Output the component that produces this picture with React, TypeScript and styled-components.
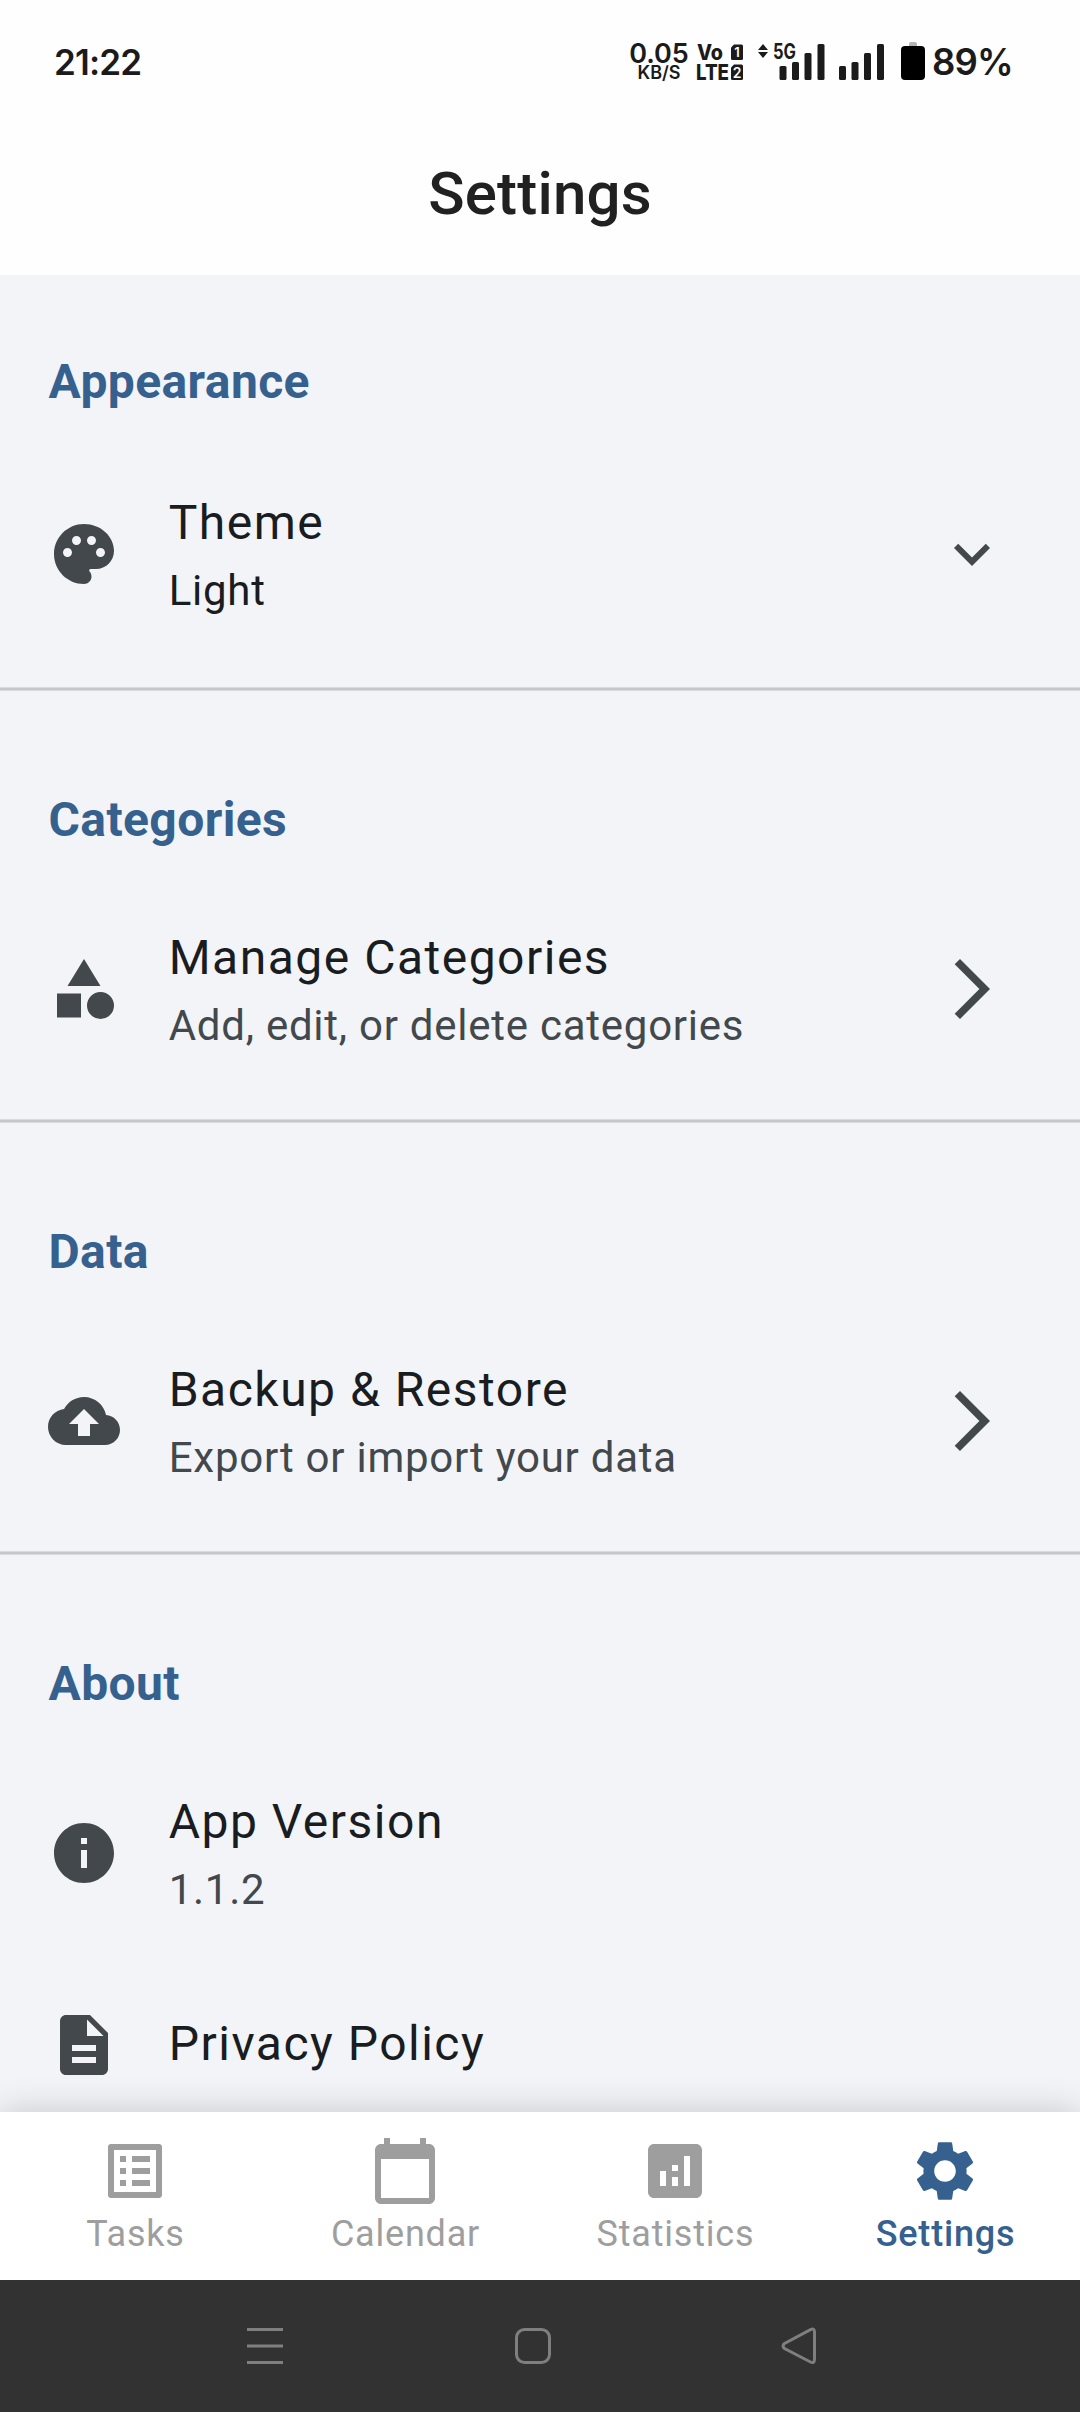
import React from "react";
import styled, { createGlobalStyle } from "styled-components";

const GlobalStyle = createGlobalStyle`
  * { box-sizing: border-box; }
  body { margin: 0; background: #fefefe; }
`;

const Screen = styled.div`
  width: 1080px;
  height: 2412px;
  display: flex;
  flex-direction: column;
  overflow: hidden;
  background: #f2f4f8;
  font-family: Roboto, "Noto Sans", sans-serif;
`;

const StatusBar = styled.div`
  height: 124px;
  flex: none;
  display: flex;
  align-items: center;
  padding: 0 68px 0 54px;
  background: #fefefe;
  color: #1b1b1b;
  font-family: Inter, "Noto Sans", sans-serif;
  font-weight: 600;
`;

const Clock = styled.span`
  font-size: 35px;
  line-height: 40px;
  font-weight: 600;
  letter-spacing: -0.8px;
  margin: 0 auto 1px 0;
`;

const Speed = styled.div`
  width: 60px;
  display: flex;
  flex-direction: column;
  align-items: center;
  margin-right: 8px;
`;

const SpeedValue = styled.span`
  font-size: 27px;
  line-height: 21px;
`;

const SpeedUnit = styled.span`
  font-size: 18px;
  line-height: 17px;
`;

const StatusGlyph = styled.svg<{ $gap: number }>`
  display: block;
  flex: none;
  overflow: visible;
  margin-right: ${(p) => p.$gap}px;
  fill: #1b1b1b;
`;

const Battery = styled.span`
  width: 80px;
  font-size: 36.5px;
  line-height: 44px;
  font-weight: 600;
  letter-spacing: -0.8px;
  white-space: nowrap;
`;

const AppBar = styled.header`
  height: 151px;
  flex: none;
  display: flex;
  justify-content: center;
  padding-top: 35px;
  background: #fefefe;
`;

const PageTitle = styled.h1`
  margin: 0;
  font-size: 60px;
  line-height: 70px;
  font-weight: 550;
  letter-spacing: 0.2px;
  color: #212121;
`;

const Content = styled.main`
  flex: 1;
  min-height: 0;
  overflow: hidden;
`;

const Section = styled.section<{ $height: number; $top?: number }>`
  height: ${(p) => p.$height}px;
  padding-top: ${(p) => p.$top ?? 93}px;
`;

const SectionTitle = styled.h2`
  margin: 0 48px 0 48.5px;
  font-size: 48px;
  line-height: 72px;
  font-weight: 700;
  letter-spacing: 0.4px;
  color: #36618e;
`;

const Row = styled.div<{ $height: number }>`
  height: ${(p) => p.$height}px;
  display: flex;
  align-items: center;
  padding: 0 72px 0 48px;
`;

const RowText = styled.div`
  flex: 1;
  margin-left: 48.7px;
  display: flex;
  flex-direction: column;
  gap: 2px;
`;

const RowTitle = styled.span<{ $single?: boolean }>`
  font-size: 48px;
  line-height: 72px;
  letter-spacing: 1.5px;
  color: #191c20;
  padding-bottom: ${(p) => (p.$single ? 2 : 0)}px;
`;

const RowNote = styled.span<{ $strong?: boolean }>`
  font-size: 42px;
  line-height: 60px;
  letter-spacing: 0.75px;
  color: ${(p) => (p.$strong ? "#191c20" : "#42484b")};
`;

const Divider = styled.div`
  height: 4px;
  background: #c3c7ca;
  border-top: 1px solid #d9dcdf;
  border-bottom: 1px solid #d9dcdf;
`;

const IconSvg = styled.svg`
  width: 72px;
  height: 72px;
  flex: none;
  display: block;
  fill: currentColor;
  color: inherit;
`;

const RowIcon = styled.span`
  color: #42484b;
  flex: none;
`;

const TabBar = styled.nav`
  height: 168px;
  flex: none;
  display: grid;
  grid-template-columns: repeat(4, 1fr);
  background: #fff;
  box-shadow: 0 0 34px rgba(0, 0, 0, 0.19);
  position: relative;
`;

const Tab = styled.div<{ $active?: boolean }>`
  display: flex;
  flex-direction: column;
  align-items: center;
  padding-top: 23px;
  color: ${(p) => (p.$active ? "#36618e" : "#9e9e9e")};
  font-weight: ${(p) => (p.$active ? 550 : 400)};
`;

const TabLabel = styled.span`
  font-size: 36px;
  line-height: 48px;
  letter-spacing: 0.8px;
  margin-top: 3px;
  padding-left: 1px;
`;

const SystemBar = styled.div`
  height: 132px;
  flex: none;
  display: flex;
  gap: 232px;
  padding: 48px 0 0 247px;
  background: #323232;
  position: relative;
`;

const SystemIcon = styled.svg`
  display: block;
  flex: none;
  width: 36px;
  height: 36px;
  overflow: visible;
  fill: none;
  stroke: #7f7f7f;
  stroke-width: 3px;
`;

const paths = {
  palette:
    "M12 2C6.49 2 2 6.49 2 12s4.49 10 10 10c1.38 0 2.5-1.12 2.5-2.5 0-.61-.23-1.2-.64-1.67-.08-.1-.13-.21-.13-.33 0-.28.22-.5.5-.5H16c3.31 0 6-2.69 6-6 0-4.96-4.49-9-10-9zm5.5 11c-.83 0-1.5-.67-1.5-1.5s.67-1.5 1.5-1.5 1.5.67 1.5 1.5-.67 1.5-1.5 1.5zm-3-4c-.83 0-1.5-.67-1.5-1.5S13.67 6 14.5 6s1.5.67 1.5 1.5S15.33 9 14.5 9zM5 11.5c0-.83.67-1.5 1.5-1.5s1.5.67 1.5 1.5S7.33 13 6.5 13 5 12.33 5 11.5zm6-4c0 .83-.67 1.5-1.5 1.5S8 8.33 8 7.5 8.67 6 9.5 6s1.5.67 1.5 1.5z",
  category:
    "M12 2l-5.5 9h11L12 2zm5.5 11a4.5 4.5 0 1 0 0 9 4.5 4.5 0 0 0 0-9zM3 13.5h8v8H3z",
  cloud:
    "M19.35 10.04C18.67 6.59 15.64 4 12 4 9.11 4 6.6 5.64 5.35 8.04 2.34 8.36 0 10.91 0 14c0 3.31 2.69 6 6 6h13c2.76 0 5-2.24 5-5 0-2.64-2.05-4.78-4.65-4.96zM14 13v4h-4v-4H7l5-5 5 5h-3z",
  info: "M12 2C6.48 2 2 6.48 2 12s4.48 10 10 10 10-4.48 10-10S17.52 2 12 2zm1 15h-2v-6h2v6zm0-8h-2V7h2v2z",
  document:
    "M14 2H6c-1.1 0-1.99.9-1.99 2L4 20c0 1.1.89 2 1.99 2H18c1.1 0 2-.9 2-2V8l-6-6zm2 16H8v-2h8v2zm0-4H8v-2h8v2zm-3-5V3.5L18.5 9H13z",
  down: "M7.41 8.59L12 13.17l4.59-4.58L18 10l-6 6-6-6 1.41-1.41z",
  forward: "M6.23 20.23L8 22l10-10L8 2 6.23 3.77 14.46 12z",
  tasks:
    "M19 5v14H5V5h14m1.1-2H3.9c-.5 0-.9.4-.9.9v16.2c0 .4.4.9.9.9h16.2c.4 0 .9-.5.9-.9V3.9c0-.5-.5-.9-.9-.9zM11 7h6v2h-6V7zm0 4h6v2h-6v-2zm0 4h6v2h-6zM7 7h2v2H7zm0 4h2v2H7zm0 4h2v2H7z",
  calendar:
    "M20 3h-1V1h-2v2H7V1H5v2H4c-1.1 0-2 .9-2 2v16c0 1.1.9 2 2 2h16c1.1 0 2-.9 2-2V5c0-1.1-.9-2-2-2zm0 18H4V8h16v13z",
  statistics:
    "M19 3H5c-1.1 0-2 .9-2 2v14c0 1.1.9 2 2 2h14c1.1 0 2-.9 2-2V5c0-1.1-.9-2-2-2zM9 17H7v-5h2v5zm4 0h-2v-3h2v3zm0-5h-2v-2h2v2zm4 5h-2V7h2v10z",
  settings:
    "M19.14 12.94c.04-.3.06-.61.06-.94 0-.32-.02-.64-.07-.94l2.03-1.58c.18-.14.23-.41.12-.61l-1.92-3.32c-.12-.22-.37-.29-.59-.22l-2.39.96c-.5-.38-1.03-.7-1.62-.94l-.36-2.54c-.04-.24-.24-.41-.48-.41h-3.84c-.24 0-.43.17-.47.41l-.36 2.54c-.59.24-1.13.57-1.62.94l-2.39-.96c-.22-.08-.47 0-.59.22L2.74 8.87c-.12.21-.08.47.12.61l2.03 1.58c-.05.3-.09.63-.09.94s.02.64.07.94l-2.03 1.58c-.18.14-.23.41-.12.61l1.92 3.32c.12.22.37.29.59.22l2.39-.96c.5.38 1.03.7 1.62.94l.36 2.54c.05.24.24.41.48.41h3.84c.24 0 .44-.17.47-.41l.36-2.54c.59-.24 1.13-.56 1.62-.94l2.39.96c.22.08.47 0 .59-.22l1.92-3.32c.12-.22.07-.47-.12-.61l-2.01-1.58zM12 15.6c-1.98 0-3.6-1.62-3.6-3.6s1.62-3.6 3.6-3.6 3.6 1.62 3.6 3.6-1.62 3.6-3.6 3.6z",
};

type IconName = keyof typeof paths;

const Icon = ({ name }: { name: IconName }) => (
  <IconSvg viewBox="0 0 24 24">
    <path fillRule="evenodd" d={paths[name]} />
  </IconSvg>
);

interface SettingProps {
  icon: IconName;
  title: string;
  note?: string;
  strong?: boolean;
  action?: IconName;
  height?: number;
}

const Setting = ({ icon, title, note, strong, action, height = 266 }: SettingProps) => (
  <Row $height={height}>
    <RowIcon>
      <Icon name={icon} />
    </RowIcon>
    <RowText>
      <RowTitle $single={!note}>{title}</RowTitle>
      {note && <RowNote $strong={strong}>{note}</RowNote>}
    </RowText>
    {action && (
      <RowIcon>
        <Icon name={action} />
      </RowIcon>
    )}
  </Row>
);

const tabs: { icon: IconName; label: string }[] = [
  { icon: "tasks", label: "Tasks" },
  { icon: "calendar", label: "Calendar" },
  { icon: "statistics", label: "Statistics" },
  { icon: "settings", label: "Settings" },
];

const SignalBars = () => (
  <>
    <rect x="0" y="22" width="7" height="14" rx="1.5" />
    <rect x="12.5" y="18" width="7" height="18" rx="1.5" />
    <rect x="25" y="9" width="7" height="27" rx="1.5" />
    <rect x="38" y="0" width="7" height="36" rx="1.5" />
  </>
);

export default function App() {
  return (
    <Screen>
      <GlobalStyle />
      <StatusBar>
        <Clock>21:22</Clock>
        <Speed>
          <SpeedValue>0.05</SpeedValue>
          <SpeedUnit>KB/S</SpeedUnit>
        </Speed>
        <StatusGlyph $gap={15} width="46" height="36" viewBox="0 0 46 36" fontWeight="800">
          <text x="0" y="16" fontSize="21" textLength="26" lengthAdjust="spacingAndGlyphs">Vo</text>
          <text x="-1" y="36" fontSize="21" textLength="33" lengthAdjust="spacingAndGlyphs">LTE</text>
          <path d="M37 .500h7.500a1.500 1.500 0 0 1 1.500 1.500v12.500a1.500 1.500 0 0 1-1.500 1.500H35.500a1.500 1.500 0 0 1-1.500-1.500V3.500z" />
          <path d="M37 20.500h7.500a1.500 1.500 0 0 1 1.500 1.500v12.500a1.500 1.500 0 0 1-1.500 1.500H35.500a1.500 1.500 0 0 1-1.500-1.500V23.500z" />
          <text x="40" y="13" fontSize="13" fontWeight="600" textAnchor="middle" fill="#fefefe">1</text>
          <text x="40" y="33.500" fontSize="14" fontWeight="600" textAnchor="middle" fill="#fefefe">2</text>
        </StatusGlyph>
        <StatusGlyph $gap={14} width="67" height="36" viewBox="0 0 67 36">
          <path d="M5 0l5 6H0zM5 14l5-6H0z" />
          <text x="15" y="15" fontSize="21" fontWeight="700" textLength="23" lengthAdjust="spacingAndGlyphs">5G</text>
          <g transform="translate(21.500 0)"><SignalBars /></g>
        </StatusGlyph>
        <StatusGlyph $gap={17} width="45" height="36" viewBox="0 0 45 36"><SignalBars /></StatusGlyph>
        <StatusGlyph $gap={7} width="24" height="38" viewBox="0 1 24 38">
          <rect x="8" y="0" width="8" height="6" rx="2" fill="#b5b5b5" />
          <rect x="0" y="4" width="24" height="34" rx="4" fill="#000" />
        </StatusGlyph>
        <Battery>89%</Battery>
      </StatusBar>
      <AppBar>
        <PageTitle>Settings</PageTitle>
      </AppBar>
      <Content>
        <Section $height={412} $top={71}>
          <SectionTitle>Appearance</SectionTitle>
          <Setting icon="palette" title="Theme" note="Light" strong action="down" height={272} />
        </Section>
        <Divider />
        <Section $height={428}>
          <SectionTitle>Categories</SectionTitle>
          <Setting icon="category" title="Manage Categories" note="Add, edit, or delete categories" action="forward" />
        </Section>
        <Divider />
        <Section $height={428}>
          <SectionTitle>Data</SectionTitle>
          <Setting icon="cloud" title="Backup & Restore" note="Export or import your data" action="forward" />
        </Section>
        <Divider />
        <Section $height={557}>
          <SectionTitle>About</SectionTitle>
          <Setting icon="info" title="App Version" note="1.1.2" />
          <Setting icon="document" title="Privacy Policy" height={118} />
        </Section>
      </Content>
      <TabBar>
        {tabs.map((t) => (
          <Tab key={t.label} $active={t.label === "Settings"}>
            <Icon name={t.icon} />
            <TabLabel>{t.label}</TabLabel>
          </Tab>
        ))}
      </TabBar>
      <SystemBar>
        <SystemIcon viewBox="0 0 36 36">
          <path d="M0 1.500h36M0 18h36M0 34.500h36" />
        </SystemIcon>
        <SystemIcon viewBox="0 0 36 36">
          <rect x="1.500" y="1.500" width="33" height="33" rx="8" />
        </SystemIcon>
        <SystemIcon viewBox="2 0 36 36">
          <path d="M3.500 15.500L29.500 1.600Q33.500 -.200 33.500 4V31Q33.500 36 29.500 34L3.500 20.500Q.500 18 3.500 15.500z" />
        </SystemIcon>
      </SystemBar>
    </Screen>
  );
}
